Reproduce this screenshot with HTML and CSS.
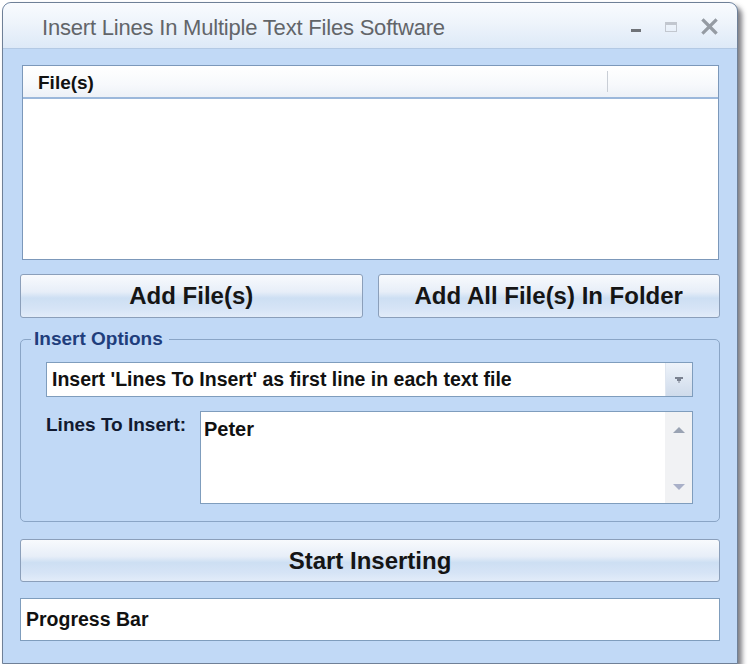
FILE: index.html
```html
<!DOCTYPE html>
<html>
<head>
<meta charset="utf-8">
<link rel="stylesheet" href="styles.css">
</head>
<body>
<div class="window">
  <div class="titlebar">
    <span class="title">Insert Lines In Multiple Text Files Software</span>
    <div class="controls">
      <span class="ctl-min"></span>
      <span class="ctl-max"></span>
      <svg class="ctl-close" width="17" height="17" viewBox="0 0 17 17"><path d="M2.5 2.5 L14.5 14.5 M14.5 2.5 L2.5 14.5" stroke="#959ba3" stroke-width="3.2" stroke-linecap="square"/></svg>
    </div>
  </div>
  <div class="content">
    <div class="filelist">
      <div class="fl-header">
        <span class="fl-col">File(s)</span>
        <span class="fl-sep"></span>
      </div>
      <div class="fl-body"></div>
    </div>
    <div class="btn-row">
      <button class="btn">Add File(s)</button>
      <button class="btn">Add All File(s) In Folder</button>
    </div>
    <fieldset class="group">
      <legend class="group-label">Insert Options</legend>
      <div class="combo">
        <span class="combo-text">Insert 'Lines To Insert' as first line in each text file</span>
        <span class="combo-btn"><svg width="10" height="6" viewBox="0 0 10 6"><path d="M1 1 H9 M3 3 H7 M4.5 5 H5.5" stroke="#5a6070" stroke-width="1.5"/></svg></span>
      </div>
      <div class="lines-row">
        <span class="lines-label">Lines To Insert:</span>
        <div class="textbox">
          <span class="textbox-text">Peter</span>
          <div class="scroll">
            <svg width="14" height="8" viewBox="0 0 14 8"><path d="M7 1 L13 7 H1 Z" fill="#9aa3b3"/></svg>
            <svg width="14" height="8" viewBox="0 0 14 8"><path d="M1 1 H13 L7 7 Z" fill="#a9b0c8"/></svg>
          </div>
        </div>
      </div>
    </fieldset>
    <button class="btn btn-wide">Start Inserting</button>
    <div class="progress">Progress Bar</div>
  </div>
</div>
</body>
</html>
```
FILE: styles.css
```css
html, body {
  margin: 0;
  padding: 0;
  background: #ffffff;
}
body {
  font-family: "Liberation Sans", Arial, sans-serif;
}
.window {
  margin: 2px 0 0 2px;
  width: 734px;
  height: 660px;
  border: 1px solid #6f8097;
  border-radius: 9px 9px 0 0;
  background: #c1d9f6;
  box-shadow: 4px 4px 5px rgba(40, 40, 50, 0.6);
  display: flex;
  flex-direction: column;
  overflow: hidden;
}
.titlebar {
  height: 45px;
  flex: none;
  display: flex;
  align-items: center;
  justify-content: space-between;
  background: linear-gradient(#f9fbfe 0%, #eef4fb 45%, #dde9f7 100%);
  border-bottom: 1px solid #b3c9e4;
  border-radius: 8px 8px 0 0;
  padding: 0 19px 0 39px;
}
.title {
  font-size: 22px;
  color: #626569;
  letter-spacing: -0.2px;
  margin-top: 4px;
}
.controls {
  display: flex;
  align-items: center;
  gap: 24px;
  margin-top: 2px;
}
.ctl-min {
  width: 10px;
  height: 3px;
  background: #6f7378;
  margin-top: 8px;
}
.ctl-max {
  width: 12px;
  height: 10px;
  box-sizing: border-box;
  border: 1px solid #c2c7cf;
  border-top: 3px solid #c2c7cf;
}
.ctl-close {
  display: block;
}
.content {
  flex: 1;
  display: flex;
  flex-direction: column;
  padding: 16px 17px 0 17px;
}
.filelist {
  height: 193px;
  margin: 0 1px 0 2px;
  border: 1px solid #7c98ba;
  background: #ffffff;
  display: flex;
  flex-direction: column;
}
.fl-header {
  height: 31px;
  display: flex;
  align-items: center;
  background: linear-gradient(#ffffff 0%, #f7f9fc 60%, #edf1f7 100%);
  border-bottom: 2px solid #9cb8db;
  padding-left: 15px;
}
.fl-col {
  font-weight: bold;
  font-size: 19px;
  color: #111;
  width: 569px;
  margin-top: 3px;
}
.fl-sep {
  width: 1px;
  height: 21px;
  background: #c9ced6;
}
.fl-body {
  flex: 1;
}
.btn-row {
  display: flex;
  gap: 15px;
  margin-top: 14px;
}
.btn {
  flex: 1;
  height: 44px;
  border: 1px solid #8b9fba;
  border-radius: 3px;
  background: linear-gradient(#f8fafd 0%, #e7eef8 40%, #cddff3 55%, #d6e4f6 80%, #e2ecf9 100%);
  font-family: "Liberation Sans", Arial, sans-serif;
  font-weight: bold;
  font-size: 24px;
  color: #151515;
  padding: 0;
  margin: 0;
}
.group {
  margin: 11px 0 0 0;
  border: 1px solid #8aa5c6;
  border-radius: 5px;
  padding: 13px 26px 17px 25px;
  min-width: 0;
}
.group-label {
  font-weight: bold;
  font-size: 19px;
  line-height: 20px;
  color: #1f3e7c;
  padding: 0 6px 0 3px;
  margin-left: -15px;
}
.combo {
  height: 33px;
  border: 1px solid #7f9dbd;
  background: #ffffff;
  display: flex;
  align-items: stretch;
}
.combo-text {
  flex: 1;
  display: flex;
  align-items: center;
  padding-left: 5px;
  font-weight: bold;
  font-size: 19.5px;
  color: #111;
}
.combo-btn {
  width: 26px;
  display: flex;
  align-items: center;
  justify-content: center;
  background: linear-gradient(#eef3fa, #cfdbeb);
  border-left: 1px solid #dfe6f0;
}
.lines-row {
  display: flex;
  margin-top: 14px;
}
.lines-label {
  width: 154px;
  font-weight: bold;
  font-size: 19px;
  color: #111a30;
  padding-top: 3px;
}
.textbox {
  flex: 1;
  height: 91px;
  border: 1px solid #7f9dbd;
  background: #ffffff;
  display: flex;
}
.textbox-text {
  flex: 1;
  font-weight: bold;
  font-size: 20px;
  color: #111;
  padding: 6px 0 0 3px;
}
.scroll {
  width: 27px;
  background: #f1f2f4;
  display: flex;
  flex-direction: column;
  justify-content: space-between;
  align-items: center;
  padding: 14px 0 12px;
}
.scroll svg {
  display: block;
}
.btn-wide {
  flex: none;
  width: 100%;
  height: 43px;
  margin-top: 17px;
}
.progress {
  margin-top: 16px;
  height: 41px;
  border: 1px solid #7f9dbd;
  background: #ffffff;
  display: flex;
  align-items: center;
  padding-left: 5px;
  font-weight: bold;
  font-size: 19.5px;
  color: #111;
}
```
